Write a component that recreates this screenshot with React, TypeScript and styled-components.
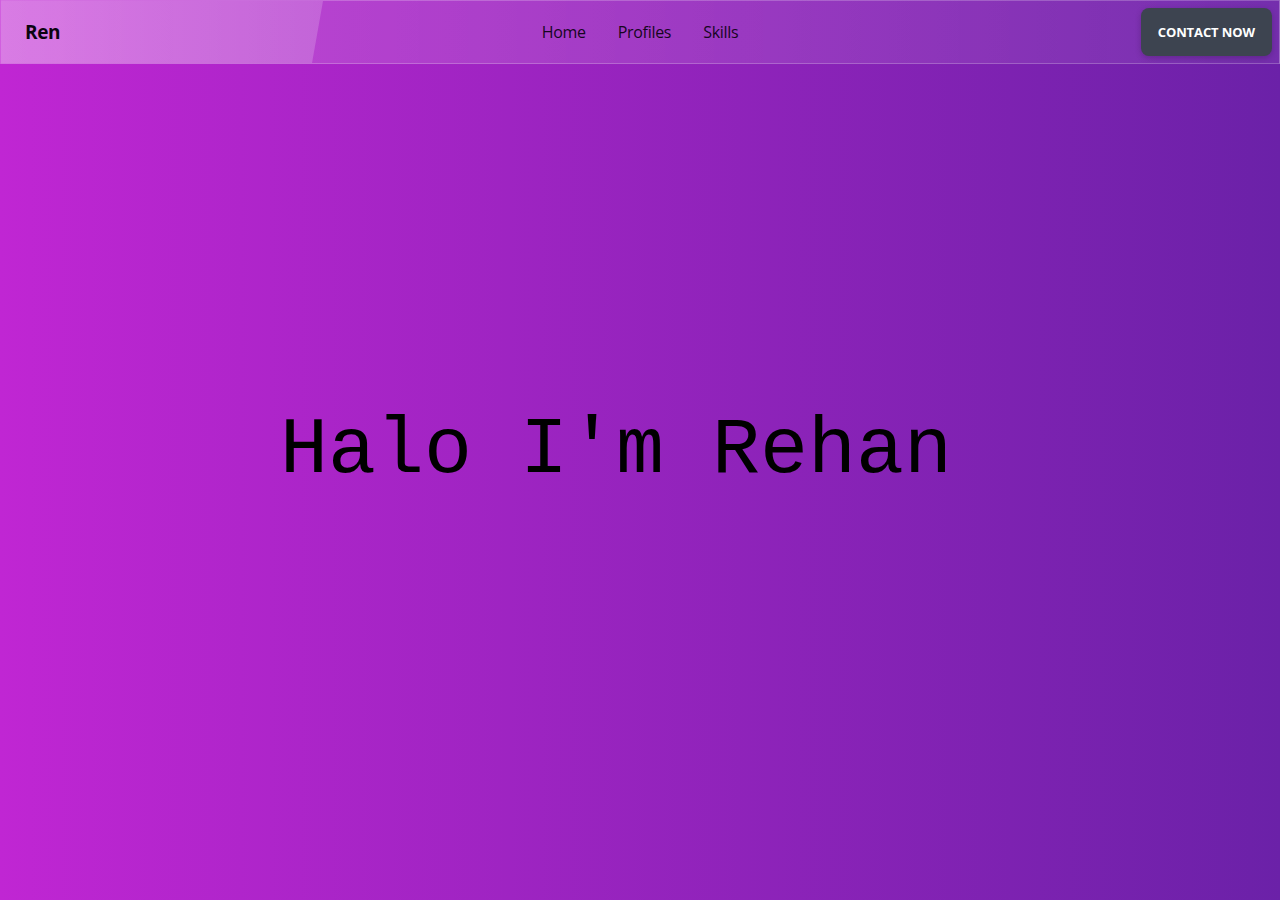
import React from "react";
import styled, { createGlobalStyle } from "styled-components";

const Global = createGlobalStyle`
  html, body { margin: 0; padding: 0; }
  body { font-family: "Open Sans", "Noto Sans", sans-serif; }
  * { box-sizing: border-box; }
`;

const Page = styled.div`
  position: relative;
  width: 100%;
  min-height: 100vh;
  background: linear-gradient(to right, #c026d3, #6b21a8);
  overflow: hidden;
`;

const Nav = styled.nav`
  position: absolute;
  top: 0;
  left: 0;
  right: 0;
  height: 64px;
  display: grid;
  grid-template-columns: 1fr auto 1fr;
  align-items: center;
  padding: 0 7px;
  background: linear-gradient(to right, rgba(255, 255, 255, 0.16), rgba(255, 255, 255, 0.06));
  border: 1px solid rgba(255, 255, 255, 0.22);
  overflow: hidden;
  z-index: 2;
`;

const Glow = styled.div`
  position: absolute;
  top: 0;
  left: 0;
  bottom: 0;
  width: 322px;
  background: linear-gradient(to right, rgba(255, 255, 255, 0.28), rgba(255, 255, 255, 0.18));
  clip-path: polygon(0 0, 100% 0, calc(100% - 11px) 100%, 0 100%);
  pointer-events: none;
`;

const Brand = styled.div`
  position: relative;
  margin-left: 17px;
  font-size: 19px;
  font-weight: 700;
  color: #0b0410;
  letter-spacing: -0.4px;
`;

const Links = styled.ul`
  position: relative;
  display: flex;
  gap: 32px;
  list-style: none;
  margin: 0;
  padding: 0;
`;

const LinkItem = styled.li`
  font-size: 16px;
  color: #16061f;
  letter-spacing: -0.3px;
`;

const Right = styled.div`
  position: relative;
  display: flex;
  justify-content: flex-end;
`;

const Contact = styled.button`
  height: 48px;
  padding: 0 17px;
  border: none;
  border-radius: 8px;
  background: #3d4450;
  color: #ffffff;
  font-family: "Open Sans", "Noto Sans", sans-serif;
  font-size: 13px;
  font-weight: 700;
  letter-spacing: -0.1px;
  box-shadow: 0 2px 6px rgba(0, 0, 0, 0.2);
  cursor: pointer;
`;

const Hero = styled.section`
  height: 900px;
  display: flex;
  align-items: center;
  justify-content: center;
`;

const Title = styled.h1`
  margin: 0;
  font-family: "Liberation Mono", "Courier New", monospace;
  font-weight: 400;
  font-size: 80px;
  color: #000000;
  transform: translateX(-24px);
`;

export default function App() {
  return (
    <>
      <Global />
      <Page>
        <Nav>
          <Glow />
          <Brand>Ren</Brand>
          <Links>
            <LinkItem>Home</LinkItem>
            <LinkItem>Profiles</LinkItem>
            <LinkItem>Skills</LinkItem>
          </Links>
          <Right>
            <Contact>CONTACT NOW</Contact>
          </Right>
        </Nav>
        <Hero>
          <Title>Halo I'm Rehan</Title>
        </Hero>
      </Page>
    </>
  );
}
